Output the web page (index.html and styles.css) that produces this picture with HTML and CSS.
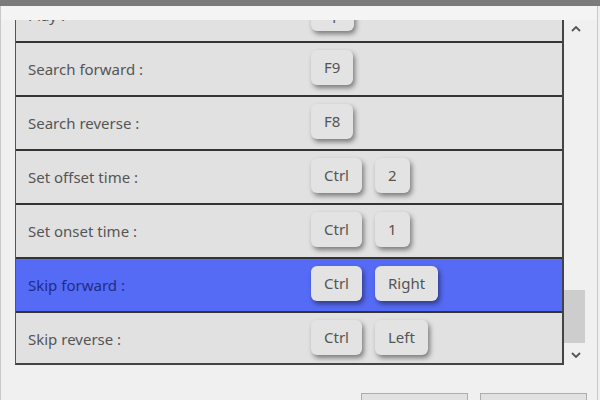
FILE: index.html
```html
<!DOCTYPE html>
<html lang="en">
<head>
    <meta charset="UTF-8">
    <title>Shortcut Keys</title>
    <link rel="stylesheet" href="styles.css">
</head>
<body>
    <div class="titlebar"></div>
    <div class="window">
        <div class="main">
            <div class="list">
                <div class="rows">
                    <div class="row">
                        <span class="label">Play :</span>
                        <div class="keys"><span class="key">Sp</span></div>
                    </div>
                    <div class="row">
                        <span class="label">Search forward :</span>
                        <div class="keys"><span class="key">F9</span></div>
                    </div>
                    <div class="row">
                        <span class="label">Search reverse :</span>
                        <div class="keys"><span class="key">F8</span></div>
                    </div>
                    <div class="row">
                        <span class="label">Set offset time :</span>
                        <div class="keys"><span class="key">Ctrl</span><span class="key">2</span></div>
                    </div>
                    <div class="row">
                        <span class="label">Set onset time :</span>
                        <div class="keys"><span class="key">Ctrl</span><span class="key">1</span></div>
                    </div>
                    <div class="row selected">
                        <span class="label">Skip forward :</span>
                        <div class="keys"><span class="key">Ctrl</span><span class="key">Right</span></div>
                    </div>
                    <div class="row">
                        <span class="label">Skip reverse :</span>
                        <div class="keys"><span class="key">Ctrl</span><span class="key">Left</span></div>
                    </div>
                </div>
            </div>
            <div class="scrollbar">
                <div class="arrow">
                    <svg width="10" height="6" viewBox="0 0 10 6"><polyline points="1,5 5,1 9,5" fill="none" stroke="#555" stroke-width="1.8"/></svg>
                </div>
                <div class="track"><div class="thumb"></div></div>
                <div class="arrow">
                    <svg width="10" height="6" viewBox="0 0 10 6"><polyline points="1,1 5,5 9,1" fill="none" stroke="#555" stroke-width="1.8"/></svg>
                </div>
            </div>
        </div>
        <div class="actions">
            <button class="btn">OK</button>
            <button class="btn">Cancel</button>
        </div>
    </div>
</body>
</html>
```

FILE: styles.css
```css
* {
    margin: 0;
    padding: 0;
    box-sizing: border-box;
}

body {
    width: 600px;
    height: 400px;
    overflow: hidden;
    background: #f0f0f0;
    font-family: 'Noto Sans', 'Open Sans', sans-serif;
    color: #555;
}

.titlebar {
    height: 6px;
    background: #7b7b7b;
}

.window {
    width: 598px;
    height: 394px;
    border-left: 1px solid #c9c9c9;
    border-right: 1px solid #c9c9c9;
    background: linear-gradient(#f4f4f4 0, #f4f4f4 14px, #f0f0f0 14px);
    padding: 14px 10px 0 14px;
}

.main {
    display: flex;
}

.list {
    width: 549px;
    height: 345px;
    overflow: hidden;
    border-left: 1px solid #555;
    border-right: 2px solid #444;
    border-bottom: 2px solid #444;
}

.rows {
    margin-top: -33px;
}

.row {
    height: 54px;
    border-top: 2px solid #333;
    background: #e1e1e1;
    display: grid;
    grid-template-columns: 295px auto;
    align-items: center;
}

.row.selected {
    background: #566bf5;
}

.label {
    padding-left: 12px;
    font-size: 15px;
}

.row.selected .label {
    color: #1d2d86;
}

.keys {
    display: flex;
    gap: 13px;
    margin-top: -4px;
}

.key {
    display: inline-block;
    height: 35px;
    line-height: 35px;
    min-width: 34px;
    padding: 0 13px;
    text-align: center;
    font-size: 15px;
    color: #555;
    background: #e3e3e3;
    border-radius: 6px;
    box-shadow: 2px 3px 5px rgba(0, 0, 0, 0.45);
}

.scrollbar {
    width: 22px;
    height: 343px;
    display: flex;
    flex-direction: column;
}

.arrow {
    height: 17px;
    display: flex;
    align-items: center;
    justify-content: center;
}

.arrow svg {
    margin-left: 2px;
}

.track {
    flex: 1;
    display: flex;
    flex-direction: column;
    justify-content: flex-end;
}

.thumb {
    width: 21px;
    height: 53px;
    margin-bottom: 3px;
    background: #cdcdcd;
}

.actions {
    display: flex;
    justify-content: flex-end;
    gap: 12px;
    margin-top: 28px;
}

.btn {
    width: 107px;
    height: 24px;
    background: #e1e1e1;
    border: 1px solid #adadad;
    font-family: 'Noto Sans', sans-serif;
    font-size: 13px;
    color: #333;
}
```
